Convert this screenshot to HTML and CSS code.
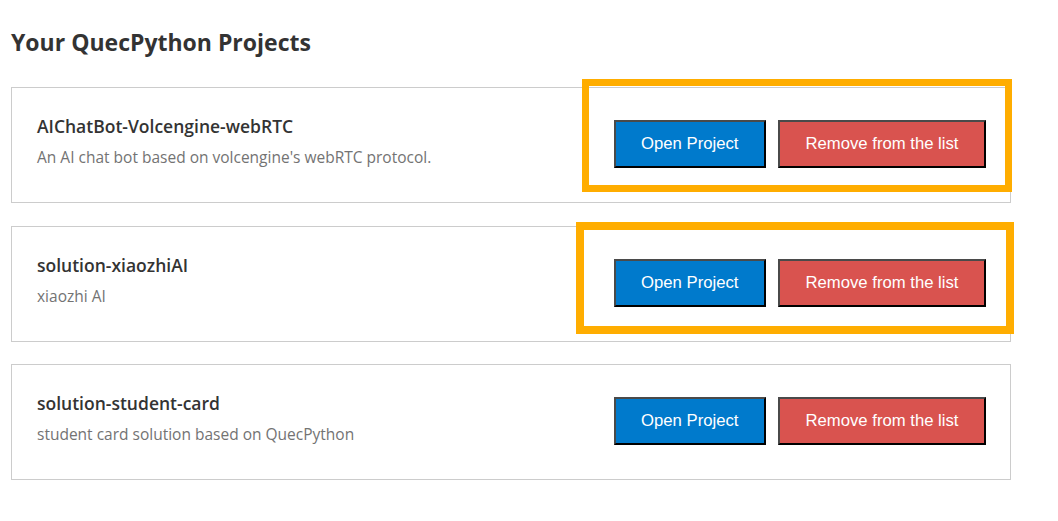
FILE: index.html
```html
<!DOCTYPE html>
<html lang="en">
<head>
<meta charset="utf-8">
<title>Your QuecPython Projects</title>
<link rel="stylesheet" href="styles.css">
</head>
<body>
  <main class="page">
    <h1 class="page-title">Your QuecPython Projects</h1>
    <ul class="project-list">
      <li class="project-card">
        <div class="project-info">
          <h2 class="project-name">AIChatBot-Volcengine-webRTC</h2>
          <p class="project-desc">An AI chat bot based on volcengine's webRTC protocol.</p>
        </div>
        <div class="project-actions">
          <button class="btn btn-open">Open Project</button>
          <button class="btn btn-remove">Remove from the list</button>
        </div>
        <span class="highlight highlight-1"></span>
      </li>
      <li class="project-card">
        <div class="project-info">
          <h2 class="project-name">solution-xiaozhiAI</h2>
          <p class="project-desc">xiaozhi AI</p>
        </div>
        <div class="project-actions">
          <button class="btn btn-open">Open Project</button>
          <button class="btn btn-remove">Remove from the list</button>
        </div>
        <span class="highlight highlight-2"></span>
      </li>
      <li class="project-card">
        <div class="project-info">
          <h2 class="project-name">solution-student-card</h2>
          <p class="project-desc">student card solution based on QuecPython</p>
        </div>
        <div class="project-actions">
          <button class="btn btn-open">Open Project</button>
          <button class="btn btn-remove">Remove from the list</button>
        </div>
      </li>
    </ul>
  </main>
</body>
</html>
```

FILE: styles.css
```css
html, body {
  margin: 0;
  padding: 0;
  background: #ffffff;
}

body {
  font-family: "Open Sans", "Noto Sans", sans-serif;
  color: #333333;
}

.page {
  width: 1000px;
  padding: 26px 0 0 11px;
}

.page-title {
  margin: 0 0 29px 0;
  font-size: 23px;
  line-height: 32px;
  font-weight: 700;
  color: #333333;
}

.project-list {
  list-style: none;
  margin: 0;
  padding: 0;
  display: flex;
  flex-direction: column;
  gap: 22.5px;
}

.project-card {
  position: relative;
  box-sizing: border-box;
  height: 116px;
  border: 1px solid #cccccc;
  padding: 0 24px 0 25px;
  display: flex;
  align-items: center;
  justify-content: space-between;
}

.project-info {
  display: flex;
  flex-direction: column;
  gap: 9px;
  padding-bottom: 9px;
}

.project-name {
  margin: 0;
  font-size: 17.5px;
  line-height: 24px;
  font-weight: 600;
  color: #333333;
}

.project-desc {
  margin: 0;
  font-size: 15.5px;
  line-height: 20px;
  font-weight: 400;
  color: #737373;
}

.project-actions {
  display: flex;
  gap: 12px;
  margin-top: -2px;
}

.btn {
  box-sizing: border-box;
  height: 48px;
  padding: 0 25.5px;
  font-family: "Liberation Sans", Arial, sans-serif;
  font-size: 16.7px;
  color: #ffffff;
  border-width: 2px;
  border-style: solid;
  border-color: #4a4a4a #000000 #000000 #4a4a4a;
  cursor: pointer;
}

.btn-open {
  background: #007acc;
}

.btn-remove {
  background: #d9534f;
}

.highlight {
  position: absolute;
  border-style: solid;
  border-color: #ffad00;
  pointer-events: none;
}

.highlight-1 {
  border-width: 7px;
  left: 570px;
  top: -9px;
  width: 416px;
  height: 99px;
}

.highlight-2 {
  border-width: 8px;
  left: 564px;
  top: -5px;
  width: 422px;
  height: 96px;
}
```
